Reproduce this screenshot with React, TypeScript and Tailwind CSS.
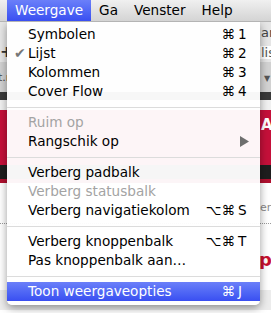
type Item =
  | { kind: 'sep' }
  | {
      kind: 'item';
      label: string;
      mods?: string;
      keyChar?: string;
      checked?: boolean;
      disabled?: boolean;
      submenu?: boolean;
      active?: boolean;
    };

const ITEMS: Item[] = [
  { kind: 'item', label: 'Symbolen', mods: '⌘', keyChar: '1' },
  { kind: 'item', label: 'Lijst', mods: '⌘', keyChar: '2', checked: true },
  { kind: 'item', label: 'Kolommen', mods: '⌘', keyChar: '3' },
  { kind: 'item', label: 'Cover Flow', mods: '⌘', keyChar: '4' },
  { kind: 'sep' },
  { kind: 'item', label: 'Ruim op', disabled: true },
  { kind: 'item', label: 'Rangschik op', submenu: true },
  { kind: 'sep' },
  { kind: 'item', label: 'Verberg padbalk' },
  { kind: 'item', label: 'Verberg statusbalk', disabled: true },
  { kind: 'item', label: 'Verberg navigatiekolom', mods: '⌥⌘', keyChar: 'S' },
  { kind: 'sep' },
  { kind: 'item', label: 'Verberg knoppenbalk', mods: '⌥⌘', keyChar: 'T' },
  { kind: 'item', label: 'Pas knoppenbalk aan…' },
  { kind: 'sep' },
  { kind: 'item', label: 'Toon weergaveopties', mods: '⌘', keyChar: 'J', active: true },
];

export default function App() {
  return (
    <div
      className="relative w-[271px] h-[313px] overflow-hidden bg-white"
      style={{ fontFamily: '"DejaVu Sans", "Liberation Sans", sans-serif' }}
    >
      <MenuBar />
      <BackgroundPage />
      <ViewMenu />
    </div>
  );
}

function MenuBar() {
  return (
    <div className="relative z-10 flex h-[22px] items-stretch bg-gradient-to-b from-[#f0f0f0] to-[#d4d4d4] border-b border-[#b4b4b4] text-[13.6px] text-black">
      <div className="ml-[7px] flex items-center bg-gradient-to-b from-[#6b7ff9] to-[#3a4ef1] px-[8px] text-white">
        Weergave
      </div>
      <div className="flex items-center px-[8px]">Ga</div>
      <div className="flex items-center px-[8px]">Venster</div>
      <div className="flex items-center px-[8px]">Help</div>
    </div>
  );
}

// a band of the browser window behind the menu; only its edges show
function Band({
  className,
  left,
  right,
}: {
  className: string;
  left?: React.ReactNode;
  right?: React.ReactNode;
}) {
  return (
    <div className={`flex ${className}`}>
      <div className="w-[7px] overflow-hidden">{left}</div>
      <div className="ml-auto w-[11px] overflow-hidden">{right}</div>
    </div>
  );
}

function BackgroundPage() {
  return (
    <div className="flex flex-col text-[13px] leading-none">
      <Band
        className="h-[20px] items-center bg-[#e6e6e6] text-[#444]"
        right={<span className="pl-[1px]">ar</span>}
      />
      <Band
        className="h-[20px] items-center bg-[#e6e6e6] text-[#333]"
        left={<span className="text-[16px] font-bold">+</span>}
        right={<span className="block bg-white pl-[1px] text-[#555]">lis</span>}
      />
      <Band
        className="h-[30px] items-center bg-[#d2d2d2] text-[11px] text-[#444]"
        left={<span className="-ml-[2px]">t.n</span>}
        right={<span className="pl-[4px] text-[8px] text-[#555]">▼</span>}
      />
      <Band className="h-[8px] bg-[#3a3a3a]" />
      <Band className="h-[10px] bg-[#f1f1f1]" />
      <Band
        className="h-[55px] items-start bg-[#c5103a] pt-[8px] text-[15px] font-bold text-white"
        right={<span className="pl-[1px]">A</span>}
      />
      <Band className="h-[14px] bg-[#1e1e1e]" />
      <Band className="h-[4px] bg-[#b0102f]" />
      <Band
        className="h-[30px] items-end bg-white text-[11px] text-[#8a8a8a]"
        right={<span>ens</span>}
      />
      <div className="h-[10px] bg-white" />
      <div className="border-t border-dotted border-[#9a9a9a]" />
      <div className="h-[26px] bg-white" />
      <Band
        className="h-[20px] items-center bg-white text-[18px] font-bold text-[#c8102e]"
        right={<span className="-ml-[1px]">p</span>}
      />
      <div className="h-[20px] bg-white" />
      <div className="h-[20px] bg-[#ececec]" />
    </div>
  );
}

function ViewMenu() {
  return (
    <div className="absolute left-[7px] top-[22px] w-[253px] rounded-b-[5px] bg-white/[0.96] pt-[3px] pb-[4px] text-[13.6px] shadow-[0_3px_8px_rgba(0,0,0,0.4)]">
      {ITEMS.map((item, i) =>
        item.kind === 'sep' ? (
          <div key={i} className="flex h-[12px] items-center">
            <div className="h-px w-full bg-[#dcdcdc]" />
          </div>
        ) : (
          <MenuRow key={i} item={item} />
        )
      )}
    </div>
  );
}

function MenuRow({ item }: { item: Extract<Item, { kind: 'item' }> }) {
  const color = item.active ? 'text-white' : item.disabled ? 'text-[#a3a3a3]' : 'text-black';
  return (
    <div
      className={`relative flex h-[19px] items-center pl-[21px] pr-[12px] ${color} ${
        item.active ? 'bg-gradient-to-b from-[#6b7ff9] to-[#3a4ef1]' : ''
      }`}
    >
      {item.checked && (
        <span className="absolute left-[7px] text-[14px] text-[#777]">✔</span>
      )}
      <span className="flex-1 whitespace-nowrap">{item.label}</span>
      {item.keyChar && (
        <span className="flex items-center">
          <span>{item.mods}</span>
          <span className="ml-[3px] w-[10px]">{item.keyChar}</span>
        </span>
      )}
      {item.submenu && (
        <svg width="9" height="11" viewBox="0 0 9 11" className="mr-[-1px]">
          <path d="M0 0 L9 5.5 L0 11 Z" fill="#6e6e6e" />
        </svg>
      )}
    </div>
  );
}
